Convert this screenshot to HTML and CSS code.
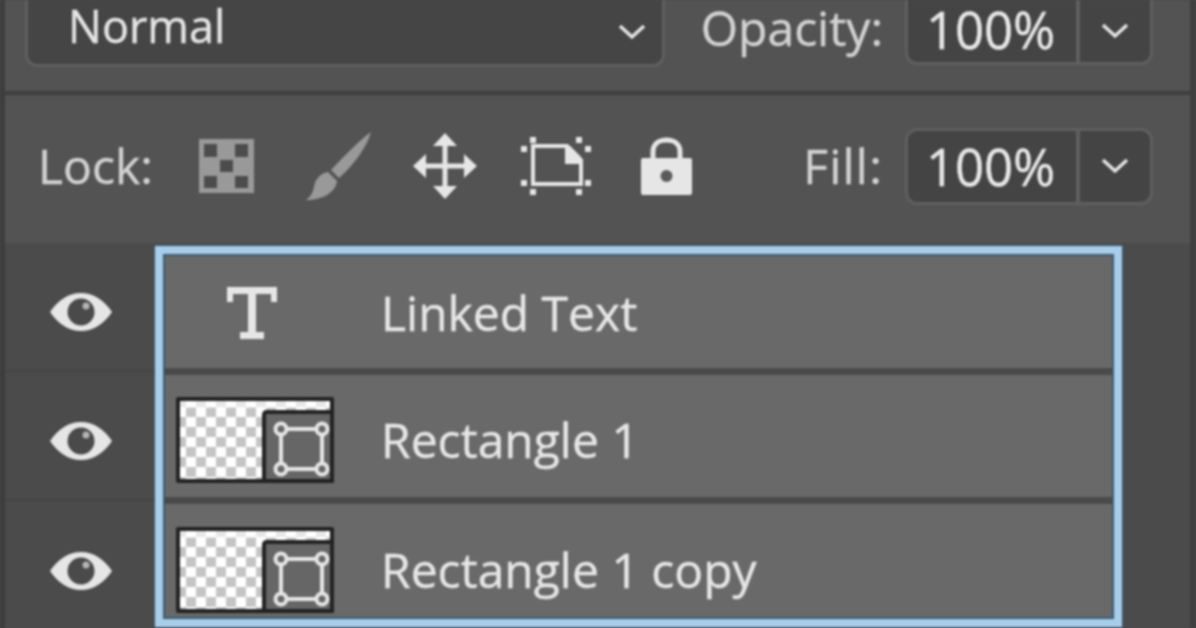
FILE: index.html
```html
<!doctype html>
<html>

<head>
    <meta charset="utf-8">
    <title>Layers</title>
    <link rel="stylesheet" href="styles.css">
</head>

<body>
    <svg class="defs" width="0" height="0">
        <defs>
            <symbol id="eye" viewBox="0 0 64 40">
                <path fill="#e6e6e6" d="M1 20C9 8 20 1 32 1s23 7 31 19C55 32 44 39 32 39S9 32 1 20Z"/>
                <circle cx="32" cy="20" r="13.5" fill="#4a4a4a"/>
                <circle cx="37" cy="14" r="3.5" fill="#b5b5b5"/>
            </symbol>
            <symbol id="chevron" viewBox="0 0 28 18">
                <path fill="none" stroke="#e6e6e6" stroke-width="3.5" d="M2 3l12 11L26 3"/>
            </symbol>
            <pattern id="checks" width="20" height="20" patternUnits="userSpaceOnUse">
                <rect width="20" height="20" fill="#fff"/>
                <rect width="10" height="10" fill="#c4c4c4"/>
                <rect x="10" y="10" width="10" height="10" fill="#c4c4c4"/>
            </pattern>
            <symbol id="thumb" viewBox="0 0 158 86">
                <rect width="158" height="86" rx="2" fill="#222"/>
                <rect x="4" y="4" width="150" height="78" fill="url(#checks)"/>
                <rect x="4" y="4" width="150" height="7" fill="#fff" opacity="0.6"/>
                <path d="M86 86V18Q86 13 91 13H158V86Z" fill="#222"/>
                <rect x="90" y="17" width="64" height="65" fill="#666"/>
                <rect x="105" y="32" width="41" height="40" fill="none" stroke="#e6e6e6" stroke-width="4"/>
                <g fill="#666" stroke="#e6e6e6" stroke-width="4">
                    <circle cx="105" cy="32" r="5.500"/>
                    <circle cx="146" cy="32" r="5.500"/>
                    <circle cx="105" cy="72" r="5.500"/>
                    <circle cx="146" cy="72" r="5.500"/>
                </g>
            </symbol>
        </defs>
    </svg>

    <div class="panel">
        <div class="mode-row">
            <div class="select">
                <span>Normal</span>
                <svg class="chevron"><use href="#chevron"/></svg>
            </div>
            <span class="label opacity-label">Opacity:</span>
            <div class="percent">
                <span class="value">100%</span>
                <span class="arrow"><svg class="chevron"><use href="#chevron"/></svg></span>
            </div>
        </div>

        <div class="lock-row">
            <span class="label lock-label">Lock:</span>
            <svg class="icon-checker" viewBox="0 0 55 54">
                <rect width="55" height="54" fill="#999"/>
                <g fill="#4c4c4c">
                    <rect x="5" y="5" width="13" height="13"/>
                    <rect x="36" y="5" width="13" height="13"/>
                    <rect x="21" y="21" width="13" height="12"/>
                    <rect x="5" y="37" width="13" height="12"/>
                    <rect x="36" y="37" width="13" height="12"/>
                </g>
            </svg>
            <svg class="icon-brush" viewBox="0 0 66 68">
                <path fill="#999" d="M65 0C62 12 50 31 33 46L25 38C38 24 54 8 65 0Z"/>
                <path fill="#999" d="M22 40L31 49C30 60 17 68 0 68C7 63 7 58 9 51C11 45 16 41 22 40Z"/>
            </svg>
            <svg class="icon-move" viewBox="0 0 64 66">
                <path fill="#e6e6e6" d="M32 0L44 13H20ZM32 66L20 53H44ZM0 33L13 21V45ZM64 33L51 45V21Z"/>
                <path fill="none" stroke="#e6e6e6" stroke-width="5" d="M32 10V56M10 33H54"/>
            </svg>
            <svg class="icon-transform" viewBox="0 0 70 58">
                <path fill="none" stroke="#e6e6e6" stroke-width="4" d="M12 9H46L60 23V47H12Z"/>
                <path fill="#e6e6e6" d="M44 9H49L60 20V27H44Z"/>
                <g fill="#e6e6e6">
                    <rect x="9" y="0" width="6" height="6"/>
                    <rect x="55" y="0" width="6" height="6"/>
                    <rect x="0" y="9" width="6" height="6"/>
                    <rect x="64" y="9" width="6" height="6"/>
                    <rect x="0" y="43" width="6" height="6"/>
                    <rect x="64" y="43" width="6" height="6"/>
                    <rect x="9" y="52" width="6" height="6"/>
                    <rect x="55" y="52" width="6" height="6"/>
                </g>
            </svg>
            <svg class="icon-lock" viewBox="0 0 51 58">
                <path fill="none" stroke="#e6e6e6" stroke-width="5" d="M12 24V15C12 7 18 3 25.500 3S39 7 39 15V24"/>
                <rect y="21" width="51" height="37" rx="2" fill="#e6e6e6"/>
                <circle cx="25.500" cy="39" r="6" fill="#5a5a5a"/>
            </svg>
            <span class="label fill-label">Fill:</span>
            <div class="percent">
                <span class="value">100%</span>
                <span class="arrow"><svg class="chevron"><use href="#chevron"/></svg></span>
            </div>
        </div>

        <div class="layers">
            <div class="eyes">
                <div class="eye-cell"><svg class="eye"><use href="#eye"/></svg></div>
                <div class="eye-cell"><svg class="eye"><use href="#eye"/></svg></div>
                <div class="eye-cell"><svg class="eye"><use href="#eye"/></svg></div>
            </div>
            <div class="selection">
                <div class="layer">
                    <div class="layer-thumb">
                        <svg class="icon-type" viewBox="0 0 50 52">
                            <path fill="#e6e6e6" d="M0 0H50V15H44V7H29V45H37V52H13V45H21V7H6V15H0Z"/>
                        </svg>
                    </div>
                    <span>Linked Text</span>
                </div>
                <div class="layer">
                    <div class="layer-thumb"><svg class="thumb"><use href="#thumb"/></svg></div>
                    <span>Rectangle 1</span>
                </div>
                <div class="layer">
                    <div class="layer-thumb"><svg class="thumb"><use href="#thumb"/></svg></div>
                    <span>Rectangle 1 copy</span>
                </div>
            </div>
        </div>
    </div>
</body>

</html>
```

FILE: styles.css
```css
html, body {
    margin: 0;
    height: 100%;
    overflow: hidden;
    background: #4a4a4a;
}
.defs {
    display: block;
    height: 0;
}
.panel {
    height: 628px;
    display: flex;
    flex-direction: column;
    box-sizing: border-box;
    border-left: 5px solid #3d3d3d;
    border-right: 6px solid #3f3f3f;
    background: #535353;
    color: #e4e4e4;
    font-family: "Open Sans", "Liberation Sans", sans-serif;
    font-size: 48px;
    line-height: 1;
    -webkit-text-stroke: 0.4px;
    filter: blur(0.8px);
    overflow: hidden;
}
.label {
    color: #d2d2d2;
}

/* top row */
.mode-row {
    height: 95px;
    flex: none;
    box-sizing: border-box;
    display: flex;
    align-items: flex-start;
    padding: 0 37px 0 20px;
    border-bottom: 4px solid #3f3f3f;
}
.select {
    width: 640px;
    height: 68px;
    box-sizing: border-box;
    margin-top: -1px;
    display: flex;
    align-items: center;
    justify-content: space-between;
    padding: 0 16px 13px 40px;
    background: #454545;
    border: 3px solid #5f5f5f;
    border-top: 0;
    border-radius: 0 0 12px 12px;
    font-size: 45px;
}
.select .chevron {
    margin-top: 13px;
}
.chevron {
    width: 28px;
    height: 18px;
    display: block;
}
.opacity-label {
    margin-left: auto;
    margin-top: 4px;
}
.percent {
    width: 248px;
    display: flex;
    box-sizing: border-box;
    background: #444;
    border: 3px solid #5f5f5f;
    border-radius: 12px;
    margin-left: 22px;
}
.mode-row .percent {
    height: 66px;
    border-top: 0;
    border-radius: 0 0 12px 12px;
    margin-top: -1px;
}
.mode-row .value {
    padding-bottom: 3px;
}
.lock-row .percent {
    height: 77px;
}
.value {
    width: 172px;
    box-sizing: border-box;
    padding-left: 18px;
    border-right: 4px solid #5f5f5f;
    color: #e8e8e8;
    font-size: 51px;
    letter-spacing: -0.2px;
    display: flex;
    align-items: center;
}
.arrow {
    flex: 1;
    display: flex;
    align-items: center;
    justify-content: center;
}

/* lock row */
.lock-row {
    height: 148px;
    flex: none;
    box-sizing: border-box;
    display: flex;
    align-items: center;
    padding: 0 37px 6px 33px;
}
.icon-checker {
    width: 55px;
    height: 54px;
    margin-left: 46px;
}
.icon-brush {
    width: 66px;
    height: 68px;
    margin-left: 52px;
}
.icon-move {
    width: 64px;
    height: 66px;
    margin-left: 41px;
}
.icon-transform {
    width: 70px;
    height: 58px;
    margin-left: 44px;
}
.icon-lock {
    width: 51px;
    height: 58px;
    margin-left: 50px;
}
.fill-label {
    margin-left: auto;
    letter-spacing: 1.2px;
}

/* layers */
.layers {
    flex: 1;
    display: flex;
    background: #4b4b4b;
    min-height: 0;
}
.eyes {
    width: 150px;
    flex: none;
}
.eye-cell {
    height: 129px;
    box-sizing: border-box;
    display: flex;
    align-items: center;
    justify-content: center;
    padding: 10px 0 0 2px;
    border-bottom: 2px solid #444;
}
.eye-cell:last-child {
    border-bottom: 0;
}
.eye {
    width: 64px;
    height: 40px;
}
.selection {
    width: 967px;
    height: 381px;
    box-sizing: border-box;
    margin-top: 3px;
    background: #696969;
    border: 8px solid #a8cde8;
    outline: 2px solid #3c5a74;
    outline-offset: -10px;
    box-shadow: 0 0 0 1px #3c5a74;
}
.layer {
    height: 129px;
    box-sizing: border-box;
    display: flex;
    align-items: center;
    padding-top: 8px;
    border-bottom: 7px solid #4a4a4a;
    color: #e6e6e6;
}
.layer:first-child {
    height: 121px;
    padding-top: 3px;
}
.layer:last-child {
    border-bottom: 0;
    height: 115px;
    padding-top: 17px;
}
.layer-thumb {
    width: 218px;
    height: 86px;
    flex: none;
    box-sizing: border-box;
    padding-left: 13px;
    display: flex;
    align-items: center;
}
.thumb {
    width: 158px;
    height: 86px;
}
.icon-type {
    width: 50px;
    height: 52px;
    margin-left: 51px;
}
```
